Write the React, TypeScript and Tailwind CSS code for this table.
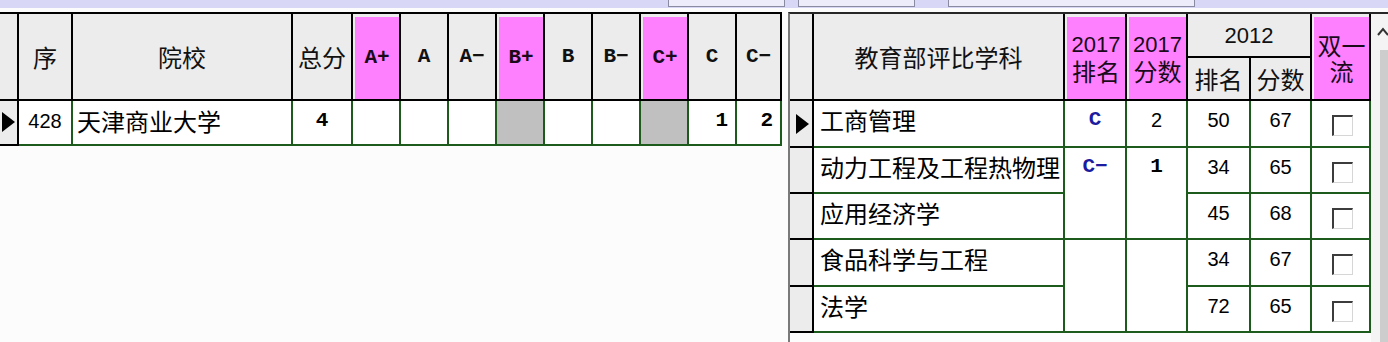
const CJK = "font-['Noto_Sans_CJK_SC','Noto_Sans',sans-serif]";
const SANS = "font-['Liberation_Sans','Noto_Sans_CJK_SC',sans-serif]";
const MONO = "font-['Liberation_Mono',monospace]";

const HEAD = 'bg-[#ececec] border-r-2 border-b-2 border-black flex items-center justify-center text-[#111]';
const HEAD_PINK = 'bg-[#ececec] border-r-2 border-b-2 border-black flex flex-col';
const PINK = 'flex-1 mt-[3px] ml-[2px] bg-[#ff80ff] flex flex-col items-center justify-center text-[#1a0a1a]';
const CELL = 'border-r-2 border-b-2 border-[#1d5b1d]';
const MARK = 'bg-[#ececec] border-r-2 border-b-2 border-black';

const GRADES = [
  { label: 'A+', pink: true },
  { label: 'A', pink: false },
  { label: 'A−', pink: false },
  { label: 'B+', pink: true },
  { label: 'B', pink: false },
  { label: 'B−', pink: false },
  { label: 'C+', pink: true },
  { label: 'C', pink: false },
  { label: 'C−', pink: false },
];

// counts per grade for the selected school; shaded = grade marked as target
const SCHOOL_ROW: { value?: string; shaded?: boolean }[] = [
  {}, {}, {}, { shaded: true }, {}, {}, { shaded: true }, { value: '1' }, { value: '2' },
];

interface Subject {
  name: string;
  rank2012: string;
  score2012: string;
}

const SUBJECTS: Subject[] = [
  { name: '工商管理', rank2012: '50', score2012: '67' },
  { name: '动力工程及工程热物理', rank2012: '34', score2012: '65' },
  { name: '应用经济学', rank2012: '45', score2012: '68' },
  { name: '食品科学与工程', rank2012: '34', score2012: '67' },
  { name: '法学', rank2012: '72', score2012: '65' },
];

function Pointer() {
  return (
    <svg width="13" height="20" viewBox="0 0 13 20">
      <path d="M0 0 L13 10 L0 20 Z" fill="#000" />
    </svg>
  );
}

function CheckBox() {
  return (
    <div className="w-[21px] h-[21px] bg-white border-t-2 border-l-2 border-[#3c3c3c] border-r border-b border-r-[#d6d6d6] border-b-[#d6d6d6]" />
  );
}

function TopBar() {
  return (
    <div className="h-[8px] shrink-0 bg-[#d8d8f6] flex pl-[668px] gap-[13px]">
      <div className="w-[117px] h-[7px] bg-[#ececfb] border-x border-b border-[#8a8aa0]" />
      <div className="w-[117px] h-[7px] bg-[#ececfb] border-x border-b border-[#8a8aa0]" />
      <div className="w-[247px] h-[7px] ml-[20px] bg-[#ececfb] border-x border-b border-[#8a8aa0]" />
    </div>
  );
}

function SchoolGrid() {
  return (
    <div className="grid grid-cols-[19px_54px_220px_60px_48px_48px_48px_48px_48px_48px_48px_48px_45px] grid-rows-[87px_45px] w-[782px] border-t-2 border-black">
      <div className={HEAD} />
      <div className={HEAD}><span className={`${CJK} text-[24px]`}>序</span></div>
      <div className={HEAD}><span className={`${CJK} text-[24px]`}>院校</span></div>
      <div className={HEAD}><span className={`${CJK} text-[24px]`}>总分</span></div>
      {GRADES.map((g) =>
        g.pink ? (
          <div key={g.label} className={HEAD_PINK}>
            <div className={PINK}>
              <span className={`${MONO} text-[21px] font-bold`}>{g.label}</span>
            </div>
          </div>
        ) : (
          <div key={g.label} className={HEAD}>
            <span className={`${MONO} text-[21px] font-bold`}>{g.label}</span>
          </div>
        )
      )}

      <div className={`${MARK} flex items-center pl-[2px] pb-[2px]`}><Pointer /></div>
      <div className={`${CELL} bg-white flex items-center justify-center pb-[4px]`}>
        <span className={`${SANS} text-[20px]`}>428</span>
      </div>
      <div className={`${CELL} bg-white flex items-center pl-[4px] pb-[4px]`}>
        <span className={`${CJK} text-[24px]`}>天津商业大学</span>
      </div>
      <div className={`${CELL} bg-white flex items-center justify-center pb-[4px]`}>
        <span className={`${MONO} text-[21px] font-bold`}>4</span>
      </div>
      {SCHOOL_ROW.map((c, i) => (
        <div
          key={i}
          className={`${CELL} ${c.shaded ? 'bg-[#c0c0c0]' : 'bg-white'} flex items-center justify-end pr-[7px] pb-[4px]`}
        >
          {c.value && <span className={`${MONO} text-[21px] font-bold`}>{c.value}</span>}
        </div>
      ))}
    </div>
  );
}

function SubjectGrid() {
  const dataText = 'bg-white flex justify-center pt-[4px] leading-[30px]';
  return (
    <div className="grid grid-cols-[24px_251px_62px_61px_63px_61px_59px] grid-rows-[44px_43px_47px_46px_46px_47px_46px] w-[581px]">
      <div className={`${HEAD} row-span-2`} />
      <div className={`${HEAD} row-span-2`}>
        <span className={`${CJK} text-[24px]`}>教育部评比学科</span>
      </div>
      <div className={`${HEAD_PINK} row-span-2`}>
        <div className={PINK}>
          <span className={`${SANS} text-[22px] leading-[26px] block`}>2017</span>
          <span className={`${CJK} text-[24px] leading-[26px] block`}>排名</span>
        </div>
      </div>
      <div className={`${HEAD_PINK} row-span-2`}>
        <div className={PINK}>
          <span className={`${SANS} text-[22px] leading-[26px] block`}>2017</span>
          <span className={`${CJK} text-[24px] leading-[26px] block`}>分数</span>
        </div>
      </div>
      <div className={`${HEAD} col-span-2`}>
        <span className={`${SANS} text-[22px]`}>2012</span>
      </div>
      <div className={`${HEAD_PINK} row-span-2`}>
        <div className={PINK}>
          <span className={`${CJK} text-[24px] leading-[26px] block`}>双一</span>
          <span className={`${CJK} text-[24px] leading-[26px] block`}>流</span>
        </div>
      </div>
      <div className={HEAD}><span className={`${CJK} text-[24px]`}>排名</span></div>
      <div className={HEAD}><span className={`${CJK} text-[24px]`}>分数</span></div>

      {SUBJECTS.map((s, i) => (
        <div key={s.name} className="contents">
          <div className={`${MARK} flex items-center pl-[6px]`}>{i === 0 && <Pointer />}</div>
          <div className={`${CELL} bg-white ${CJK} text-[24px] leading-[30px] pl-[6px] pt-[4px] whitespace-nowrap`}>
            {s.name}
          </div>
          {i === 0 && (
            <>
              <div className={`${CELL} ${dataText}`}>
                <span className={`${MONO} text-[21px] font-bold text-[#1c1ca0]`}>C</span>
              </div>
              <div className={`${CELL} ${dataText}`}>
                <span className={`${SANS} text-[20px]`}>2</span>
              </div>
            </>
          )}
          {i === 1 && (
            <>
              <div className={`${CELL} row-span-2 ${dataText}`}>
                <span className={`${MONO} text-[21px] font-bold text-[#1c1ca0]`}>C−</span>
              </div>
              <div className={`${CELL} row-span-2 ${dataText}`}>
                <span className={`${MONO} text-[21px] font-bold`}>1</span>
              </div>
            </>
          )}
          {i === 3 && (
            <>
              <div className={`${CELL} bg-white row-span-2`} />
              <div className={`${CELL} bg-white row-span-2`} />
            </>
          )}
          <div className={`${CELL} ${dataText}`}>
            <span className={`${SANS} text-[20px]`}>{s.rank2012}</span>
          </div>
          <div className={`${CELL} ${dataText}`}>
            <span className={`${SANS} text-[20px]`}>{s.score2012}</span>
          </div>
          <div className={`${CELL} bg-white flex justify-center pt-[14px] pl-[4px]`}>
            <CheckBox />
          </div>
        </div>
      ))}
    </div>
  );
}

function ScrollBar() {
  return (
    <div className="flex-1 flex flex-col bg-[#f4f4f4]">
      <div className="h-[36px] flex items-start pt-[13px] pl-[6px]">
        <svg width="12" height="9" viewBox="0 0 12 9">
          <polyline points="1,8 6,2 11,8" fill="none" stroke="#333" strokeWidth="2" />
        </svg>
      </div>
      <div className="flex-1 ml-[9px] bg-[#cdcdcd]" />
    </div>
  );
}

export default function App() {
  return (
    <div className="w-[1388px] h-[342px] overflow-hidden bg-[#fcfcfc] flex flex-col">
      <TopBar />
      <div className="h-[4px] shrink-0" />
      <div className="flex flex-1 min-h-0">
        <div className="w-[788px] shrink-0">
          <SchoolGrid />
        </div>
        <div className="flex-1 flex border-l-2 border-l-[#7a7a7a] border-t-2 border-t-[#262626]">
          <SubjectGrid />
          <ScrollBar />
        </div>
      </div>
    </div>
  );
}
